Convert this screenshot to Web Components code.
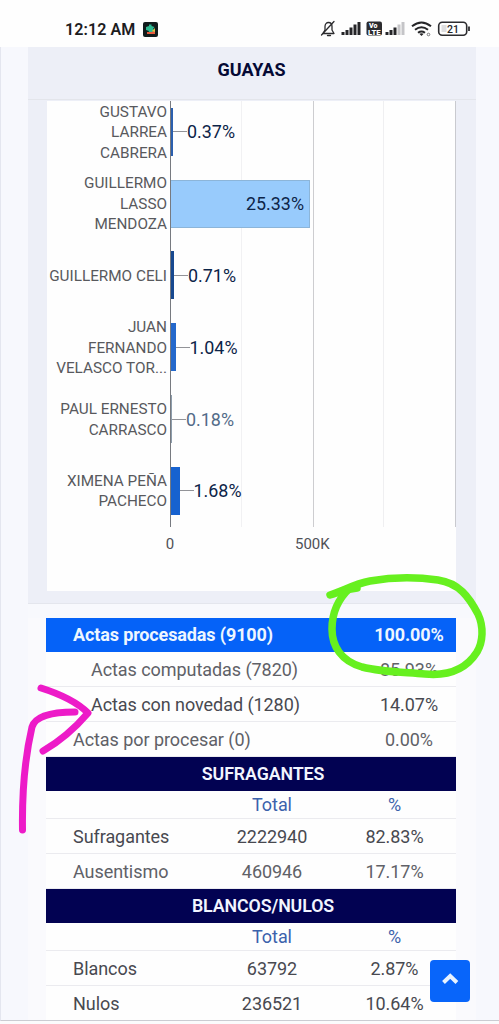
<!DOCTYPE html>
<html lang="es">
<head>
<meta charset="utf-8">
<title>Guayas</title>
<style>
  body {
    margin: 0;
    height: 1024px;
    overflow: hidden;
    font-family: Roboto, "Liberation Sans", sans-serif;
    color: #505157;
    background: #f7f8fd;
  }
</style>
</head>
<body>
<results-page>
  <status-bar slot="status">12:12 AM</status-bar>
  <chart-panel title="GUAYAS">
    <vote-bar size="2" percent="0.37%" color="#2b5fae">GUSTAVO<br>LARREA<br>CABRERA</vote-bar>
    <vote-bar size="139" percent="25.33%" color="#98cbfc" inside>GUILLERMO<br>LASSO<br>MENDOZA</vote-bar>
    <vote-bar size="3" percent="0.71%" color="#17488f">GUILLERMO CELI</vote-bar>
    <vote-bar size="4.500" percent="1.04%" color="#2468cb">JUAN<br>FERNANDO<br>VELASCO TOR...</vote-bar>
    <vote-bar size="1" percent="0.18%" color="#8d9dac" muted>PAUL ERNESTO<br>CARRASCO</vote-bar>
    <vote-bar size="8.500" percent="1.68%" color="#1762cf">XIMENA PEÑA<br>PACHECO</vote-bar>
  </chart-panel>
  <results-table>
    <table-row kind="main" label="Actas procesadas (9100)" percent="100.00%"></table-row>
    <table-row kind="sub" label="Actas computadas (7820)" percent="85.93%"></table-row>
    <table-row kind="sub" strong label="Actas con novedad (1280)" percent="14.07%"></table-row>
    <table-row kind="acta" label="Actas por procesar (0)" percent="0.00%"></table-row>
    <section-title>SUFRAGANTES</section-title>
    <table-row kind="head" total="Total" percent="%"></table-row>
    <table-row strong label="Sufragantes" total="2222940" percent="82.83%"></table-row>
    <table-row label="Ausentismo" total="460946" percent="17.17%"></table-row>
    <section-title>BLANCOS/NULOS</section-title>
    <table-row kind="head" total="Total" percent="%"></table-row>
    <table-row strong label="Blancos" total="63792" percent="2.87%"></table-row>
    <table-row strong label="Nulos" total="236521" percent="10.64%"></table-row>
  </results-table>
  <scroll-top slot="overlay"></scroll-top>
  <hand-marks slot="overlay"></hand-marks>
</results-page>

<script>
class ResultsPage extends HTMLElement {
  constructor() {
    super();
    this.attachShadow({ mode: 'open' });
    this.shadowRoot.innerHTML = `
      <style>
        :host {
          display: flex;
          flex-direction: column;
          position: relative;
          box-sizing: border-box;
          width: 499px;
          height: 1024px;
          overflow: hidden;
        }
        main {
          box-sizing: border-box;
          height: 974px;
          padding: 0 23px 0 27px;
          border-left: 1px solid #e4e6ef;
          border-bottom: 1px solid #cbccd2;
          overflow: hidden;
        }
        footer {
          flex: 1;
          background: #fbfbfc;
        }
      </style>
      <slot name="status"></slot>
      <main><slot></slot></main>
      <footer></footer>
      <slot name="overlay"></slot>
    `;
  }
}

class StatusBar extends HTMLElement {
  constructor() {
    super();
    this.attachShadow({ mode: 'open' });
    this.shadowRoot.innerHTML = `
      <style>
        :host {
          display: flex;
          box-sizing: border-box;
          height: 47px;
          flex: none;
          padding: 12px 28px 0 65px;
          justify-content: space-between;
          background: #fefefe;
          color: #1c1c1e;
        }
        .left, .right { display: flex; align-items: center; height: 34px; }
        .time { font-size: 16px; font-weight: 600; letter-spacing: 0.1px; width: 78px; white-space: nowrap; }
        svg { display: block; flex: none; }
      </style>
      <div class="left">
        <span class="time"><slot></slot></span>
        <svg width="15" height="15" viewBox="0 0 15 15">
          <rect width="15" height="15" rx="2" fill="#111b1c"/>
          <path d="M3 5 6 4V2.500h2.500V4l3 1-1.500 2 2 2-1 3-3-1-3 1 1-3-3-1z" fill="#2db990"/>
          <path d="M4 10h5l3-3v5H4z" fill="#e75b3b"/>
          <path d="M9 9 12 6v4z" fill="#d9c544"/>
        </svg>
      </div>
      <div class="right">
        <svg width="151" height="20" viewBox="0 0 151 20">
          <!-- muted bell -->
          <g fill="none" stroke="#2b2b2e" stroke-width="1.300" stroke-linecap="round" stroke-linejoin="round">
            <path d="M3.500 13.500 5 11V7.500C5 5 6.500 3.500 8.500 3.500S12 5 12 7.500V11l2 3.500H3z"/>
            <path d="M7.500 16.500h3M14 2.500 1.500 16"/>
          </g>
          <!-- first SIM -->
          <g fill="#252528">
            <rect x="21.500" y="13" width="3" height="3"/><rect x="25.500" y="11" width="3" height="5"/>
            <rect x="29.500" y="8.500" width="3" height="7.500"/><rect x="33.500" y="5.500" width="3" height="10.500"/>
            <rect x="37.500" y="3" width="3" height="13"/>
          </g>
          <rect x="46.500" y="2.500" width="15.500" height="14" rx="2" fill="#2b2b2e"/>
          <text x="49" y="9" font-size="7" font-weight="900" fill="#fff">Vo</text>
          <text x="48" y="15.500" font-size="6.500" font-weight="900" fill="#fff" textLength="12.500" lengthAdjust="spacingAndGlyphs">LTE</text>
          <!-- second SIM -->
          <g fill="#252528">
            <rect x="65.500" y="13" width="3" height="3"/><rect x="69.500" y="11" width="3" height="5"/>
            <rect x="73.500" y="8.500" width="3" height="7.500"/>
            <g fill="#c5c5c8"><rect x="77.500" y="5.500" width="3" height="10.500"/><rect x="81.500" y="3" width="3" height="13"/></g>
          </g>
          <!-- wifi -->
          <g fill="none" stroke="#252528" stroke-width="2">
            <path d="M92 7.200q9.500-7.500 19 0M95 10.700q6.500-5 13 0M98 13.700q3.500-2.500 7 0"/>
          </g>
          <path d="m99.300 14.800 2.200 2.200 2.200-2.200q-2.200-1.300-4.400 0" fill="#252528"/>
          <circle cx="108.500" cy="15.500" r="1.300" fill="none" stroke="#77777a"/>
          <!-- battery -->
          <rect x="118.700" y="3.200" width="28" height="13.100" rx="3.500" fill="none" stroke="#2b2b2e" stroke-width="1.600"/>
          <rect x="121.500" y="6" width="5" height="7" fill="#dedee0"/>
          <path d="M149 7.500v4.500" stroke="#2b2b2e" stroke-width="1.800"/>
          <text x="127" y="13.500" font-size="10.500" font-weight="500" fill="#252528">21</text>
        </svg>
      </div>
    `;
  }
}

class ChartPanel extends HTMLElement {
  constructor() {
    super();
    this.attachShadow({ mode: 'open' });
  }

  connectedCallback() {
    this.shadowRoot.innerHTML = `
      <style>
        :host {
          display: block;
          box-sizing: border-box;
          height: 557px;
          background: #edeff7;
          border-bottom: 1px solid #e4e6ed;
        }
        h1 {
          margin: 0;
          height: 53px;
          line-height: 45px;
          box-sizing: border-box;
          border-bottom: 1px solid #e3e5eb;
          text-align: center;
          font-size: 18px;
          font-weight: 700;
          color: #050a35;
          text-indent: -1px;
        }
        .chart {
          height: 490px;
          margin: 1px 20px 0 19px;
          background: #fefefe;
        }
        .plot {
          height: 426px;
          overflow: hidden;
          background:
            linear-gradient(#777a80, #777a80) 123px 0 / 1px 100% no-repeat,
            linear-gradient(#f1f1f3, #f1f1f3) 194px 0 / 1px 100% no-repeat,
            linear-gradient(#cdcdd0, #cdcdd0) 266px 0 / 1px 100% no-repeat,
            linear-gradient(#efeff1, #efeff1) 336px 0 / 1px 100% no-repeat,
            linear-gradient(#c9cacf, #c9cacf) 408px 0 / 1px 100% no-repeat;
        }
        .bars { margin-top: -5px; }
        .axis {
          display: grid;
          grid-template-columns: 60px 1fr;
          padding: 7px 0 0 93px;
          font-size: 15px;
          line-height: 21px;
        }
        .axis span { text-align: center; }
        .axis span + span { justify-self: start; margin-left: 95px; }
      </style>
      <h1>${this.getAttribute('title')}</h1>
      <div class="chart">
        <div class="plot"><div class="bars"><slot></slot></div></div>
        <div class="axis"><span>0</span><span>500K</span></div>
      </div>
    `;
  }
}

class VoteBar extends HTMLElement {
  constructor() {
    super();
    this.attachShadow({ mode: 'open' });
  }

  connectedCallback() {
    const size = this.getAttribute('size');
    const percent = this.getAttribute('percent');
    const inside = this.hasAttribute('inside');

    this.shadowRoot.innerHTML = `
      <style>
        :host {
          display: flex;
          align-items: center;
          height: 71.8px;
        }
        .name {
          width: 120px;
          margin: 1px 4px 0 0;
          flex: none;
          text-align: right;
          white-space: nowrap;
          font-size: 15.300px;
          line-height: 20.500px;
          color: #58595d;
        }
        .bar {
          display: flex;
          align-items: center;
          justify-content: flex-end;
          box-sizing: border-box;
          width: ${size}px;
          height: 48px;
          background: ${this.getAttribute('color')};
        }
        .bar.inside {
          border: 1px solid #8cb5d9;
          border-left: 0;
          padding-right: 5px;
        }
        .tick { width: 14px; height: 1px; background: #929398; }
        .value { font-size: 17.900px; color: #0c2448; }
        :host([muted]) .value { color: #526b88; }
      </style>
      <div class="name"><slot></slot></div>
      <div class="bar ${inside ? 'inside' : ''}">${inside ? `<span class="value">${percent}</span>` : ''}</div>
      ${inside ? '' : `<div class="tick"></div><span class="value">${percent}</span>`}
    `;
  }
}

class ResultsTable extends HTMLElement {
  constructor() {
    super();
    this.attachShadow({ mode: 'open' });
    this.shadowRoot.innerHTML = `
      <style>
        :host {
          display: block;
          padding: 14px 20px 0 18px;
          background: linear-gradient(#f8f9fd, #f8f9fd) 0 0 / 100% 14px no-repeat, #fafafd;
        }
        .rows { background: #fefefe; }
      </style>
      <div class="rows"><slot></slot></div>
    `;
  }
}

class SectionTitle extends HTMLElement {
  constructor() {
    super();
    this.attachShadow({ mode: 'open' });
    this.shadowRoot.innerHTML = `
      <style>
        :host {
          display: block;
          box-sizing: border-box;
          height: 34px;
          line-height: 34px;
          padding-left: 24px;
          text-align: center;
          font-size: 17.800px;
          font-weight: 600;
          letter-spacing: -0.100px;
          color: #f2f5ff;
          background: #020252;
        }
      </style>
      <slot></slot>
    `;
  }
}

class TableRow extends HTMLElement {
  constructor() {
    super();
    this.attachShadow({ mode: 'open' });
  }

  connectedCallback() {
    const label = this.getAttribute('label') || '';
    const total = this.getAttribute('total') || '';
    const percent = this.getAttribute('percent') || '';
    const acta = ['main', 'sub', 'acta'].includes(this.getAttribute('kind'));

    this.shadowRoot.innerHTML = `
      <style>
        :host {
          display: grid;
          grid-template-columns: ${acta ? '316px 94px' : '165px 122px 123px'};
          align-items: center;
          box-sizing: border-box;
          height: 35px;
          padding-top: 1px;
          border-bottom: 1px solid #ebebef;
          font-size: 18px;
          line-height: 22px;
          letter-spacing: -0.060px;
          color: #606167;
        }
        :host([strong]) { color: #484950; }
        :host([kind="main"]) {
          height: 34px;
          padding: 0;
          border: 0;
          background: #0562f8;
          color: #eef6ff;
          font-weight: 700;
          letter-spacing: -0.130px;
        }
        :host([kind="head"]) { height: 28px; color: #3c62ac; }
        .label { padding-left: 27px; white-space: nowrap; }
        :host([kind="sub"]) .label { padding-left: 45px; }
        .num { text-align: center; }
      </style>
      <span class="label">${label}</span>
      ${acta ? '' : `<span class="num">${total}</span>`}
      <span class="num">${percent}</span>
    `;
  }
}

class ScrollTop extends HTMLElement {
  constructor() {
    super();
    this.attachShadow({ mode: 'open' });
    this.shadowRoot.innerHTML = `
      <style>
        :host {
          position: absolute;
          right: 29px;
          bottom: 22px;
          width: 40px;
          height: 42px;
          border-radius: 4px;
          background: #0865fa;
        }
        svg { display: block; }
      </style>
      <svg width="40" height="42" viewBox="0 0 40 42">
        <path d="m13.500 22.500 6.700-6.500 6.700 6.500" fill="none" stroke="#e8f3ff" stroke-width="4"/>
      </svg>
    `;
  }
}

// Freehand circle and arrow drawn over the page
class HandMarks extends HTMLElement {
  constructor() {
    super();
    this.attachShadow({ mode: 'open' });
    this.shadowRoot.innerHTML = `
      <style>
        :host { position: absolute; inset: 0; pointer-events: none; }
        svg { display: block; }
        path { fill: none; stroke-linecap: round; stroke-linejoin: round; }
      </style>
      <svg width="499" height="1024" viewBox="0 0 499 1024">
        <g stroke="#67f01f" stroke-width="7.500">
          <path d="M330 595C343 591 354 584 370 581C392 577 418 577 438 580C459 583 469 597 478 614C484 627 483 642 477 652C465 671 446 676 425 674C400 672 382 672 362 667C341 661 332 646 332 629C332 612 338 599 350 588"/>
          <path d="M345 590 357 588"/>
        </g>
        <g stroke="#ed1bc8" stroke-width="7">
          <path d="M22.500 830C22 796 25 757 32 727C35 717 48 712 75 712"/>
          <path d="M41 688C60 694 77 702 88 713C76 727 62 740 43 751"/>
        </g>
      </svg>
    `;
  }
}

customElements.define('results-page', ResultsPage);
customElements.define('status-bar', StatusBar);
customElements.define('chart-panel', ChartPanel);
customElements.define('vote-bar', VoteBar);
customElements.define('results-table', ResultsTable);
customElements.define('section-title', SectionTitle);
customElements.define('table-row', TableRow);
customElements.define('scroll-top', ScrollTop);
customElements.define('hand-marks', HandMarks);
</script>
</body>
</html>
